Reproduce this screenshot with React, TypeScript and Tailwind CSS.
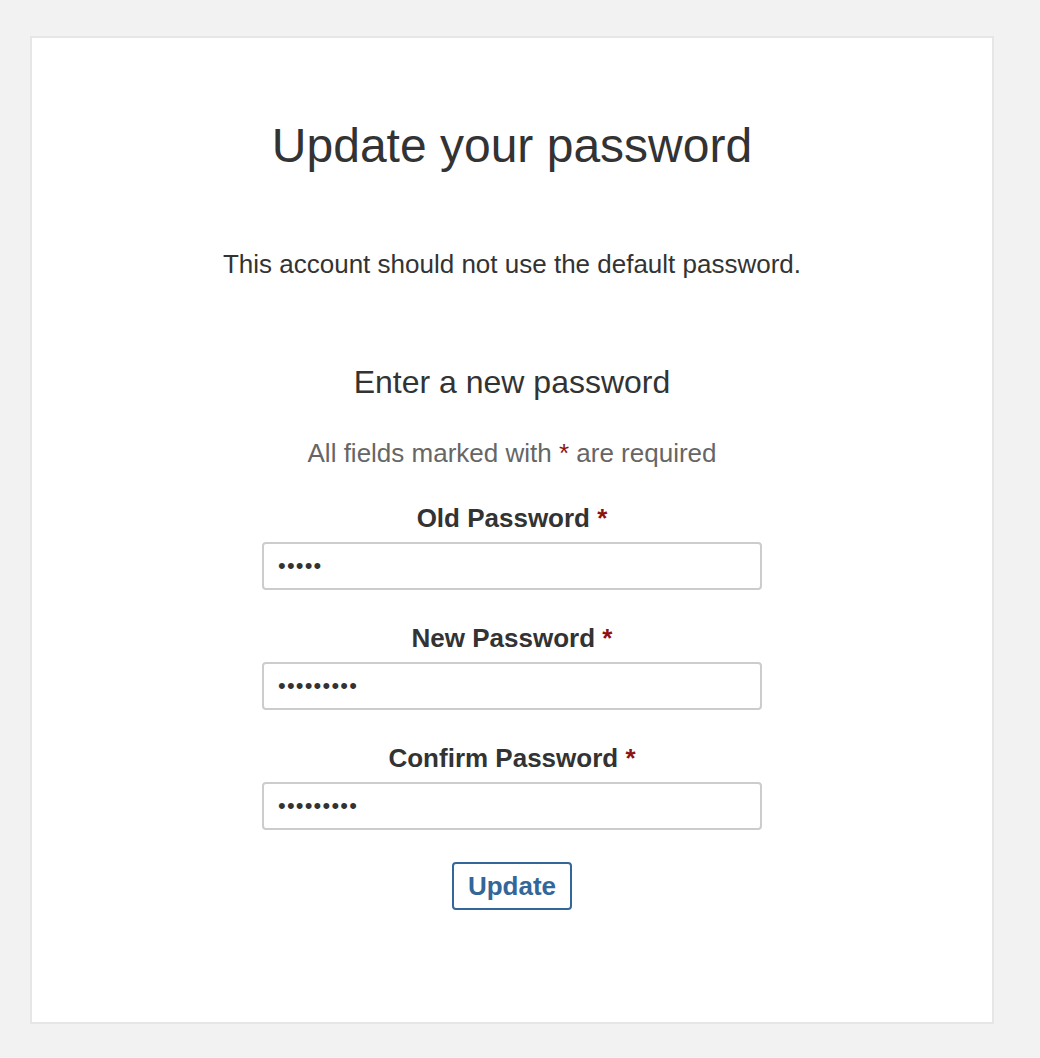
import React from "react";

const fields = [
  { label: "Old Password", value: "12345" },
  { label: "New Password", value: "123456789" },
  { label: "Confirm Password", value: "123456789" },
];

function Required() {
  return <span className="text-[#8f1212]">*</span>;
}

export default function App() {
  return (
    <div
      className="min-h-screen bg-[#f2f2f2] pt-[36px] pl-[30px] text-[#333333]"
      style={{ fontFamily: '"Liberation Sans", Arial, sans-serif' }}
    >
      <div className="w-[964px] h-[988px] border-2 border-[#e6e6e6] bg-white flex flex-col items-center pt-[80px]">
        <h1 className="text-[48px] leading-[56px] font-normal">Update your password</h1>

        <p className="mt-[74px] text-[26px] leading-[32px]">
          This account should not use the default password.
        </p>

        <h2 className="mt-[82px] text-[32px] leading-[40px] font-normal">Enter a new password</h2>

        <p className="mt-[35px] text-[26px] leading-[32px] text-[#666666]">
          All fields marked with <Required /> are required
        </p>

        <form className="mt-[31px] flex flex-col items-center" onSubmit={(e) => e.preventDefault()}>
          {fields.map((f) => (
            <div key={f.label} className="flex flex-col items-center mb-[30px]">
              <label className="text-[26px] leading-[36px] font-bold mb-[6px]">
                {f.label} <Required />
              </label>
              <input
                type="password"
                defaultValue={f.value}
                readOnly
                className="w-[500px] h-[48px] border-2 border-[#cccccc] rounded-[4px] px-[14px] text-[22px] tracking-[1.2px] text-[#333333] outline-none"
                style={{ fontFamily: '"Liberation Sans", Arial, sans-serif' }}
              />
            </div>
          ))}
          <button
            type="submit"
            className="mt-[2px] w-[120px] h-[48px] border-2 border-[#336699] rounded-[4px] bg-white text-[26px] font-bold text-[#336699]"
          >
            Update
          </button>
        </form>
      </div>
    </div>
  );
}
